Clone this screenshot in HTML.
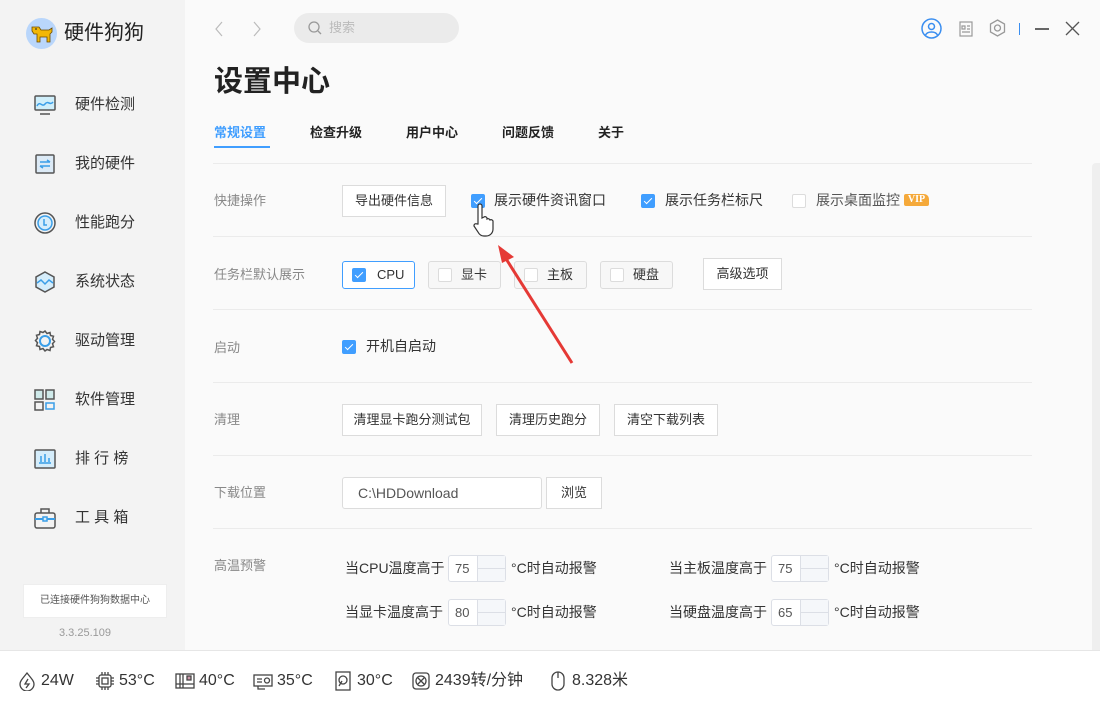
<!DOCTYPE html>
<html><head><meta charset="utf-8"><style>
*{margin:0;padding:0;box-sizing:border-box}
body{width:1100px;height:709px;overflow:hidden;background:#fafafa;font-family:"Liberation Sans","Noto Sans CJK SC",sans-serif;color:#333;position:relative;line-height:1.2}
.a{position:absolute}
#side{left:0;top:0;width:185px;height:650px;background:#f3f3f3}
.nav{position:absolute;left:33px;font-size:15px;color:#333;display:flex;align-items:center;height:24px}
.nav svg{width:24px;height:24px;margin-right:18px}
.line{position:absolute;left:213px;width:819px;height:1px;background:#ebebeb}
.lbl{position:absolute;left:214px;font-size:13px;color:#888}
.btn{position:absolute;height:31px;border:1px solid #dcdcdc;background:#fff;font-size:13px;color:#333;display:flex;align-items:center;justify-content:center}
.cb{position:absolute;width:14px;height:14px;border:1px solid #dcdcdc;background:#fff;border-radius:2px}
.cb.on{background:#409eff;border-color:#409eff}
.cb.on::after{content:"";position:absolute;left:4px;top:1px;width:3px;height:7px;border:solid #fff;border-width:0 1.5px 1.5px 0;transform:rotate(45deg)}
.t14{position:absolute;font-size:14px;color:#333}
.num{position:absolute;width:58px;height:27px;border:1px solid #dcdfe6;border-radius:3px;background:#fff;font-size:13px;color:#555}
.num span{position:absolute;left:6px;top:5px}
.num i{position:absolute;right:0;top:0;width:28px;height:25px;border-left:1px solid #dcdfe6;background:#f5f7fa}
.num i::before{content:"";position:absolute;left:0;right:0;top:12px;height:1px;background:#dcdfe6}
.bot{position:absolute;top:670px;height:22px;font-size:16px;color:#333;display:flex;align-items:center}
.bot svg{width:20px;height:20px;margin-right:4px}
</style></head><body>
<div class="a" id="side"></div>
<div class="a" style="left:26px;top:18px;width:31px;height:31px;border-radius:50%;background:#b9d6fb"></div>
<svg class="a" style="left:30px;top:23px" width="24" height="20" viewBox="0 0 24 20"><path d="M2 4h7l2 3h8l3-2v4l-2 2v8h-3v-5h-7v5H7v-8H4L2 8z" fill="#f2b705" stroke="#6b4a00" stroke-width="0.8"/><circle cx="6" cy="6" r="0.9" fill="#333"/></svg>
<div class="a" style="left:64px;top:21px;font-size:20px;color:#222">硬件狗狗</div>

<div class="nav" style="top:93px"><svg viewBox="0 0 24 24" fill="none" stroke="#555" stroke-width="1.5"><rect x="2" y="3" width="20" height="14" rx="1" fill="#cfeefa"/><path d="M4 13c3-6 5 2 8-2s5 2 8-2" stroke="#3a9ee8"/><path d="M7 21h10"/></svg>硬件检测</div>
<div class="nav" style="top:152px"><svg viewBox="0 0 24 24" fill="none" stroke="#555" stroke-width="1.5"><rect x="3" y="3" width="18" height="18" rx="1" fill="#dceaf6"/><path d="M7 10h10M14 8l3 2M7 14h10M10 16l-3-2" stroke="#3a9ee8"/></svg>我的硬件</div>
<div class="nav" style="top:211px"><svg viewBox="0 0 24 24" fill="none" stroke="#555" stroke-width="1.5"><circle cx="12" cy="12" r="10"/><circle cx="12" cy="12" r="7" stroke="#3a9ee8" fill="#d5edfb"/><path d="M11 8v6h3" stroke="#3a9ee8"/></svg>性能跑分</div>
<div class="nav" style="top:270px"><svg viewBox="0 0 24 24" fill="none" stroke="#555" stroke-width="1.5"><path d="M12 2l9 5v10l-9 5-9-5V7z" fill="#d5edfb"/><path d="M4 13l4-3 4 4 4-4 4 3" stroke="#3a9ee8"/></svg>系统状态</div>
<div class="nav" style="top:329px"><svg viewBox="0 0 24 24" fill="none" stroke="#555" stroke-width="1.5"><path d="M12 2l2 2.5 3-1 .5 3 3 .8-1 3 2 2.2-2 2.2 1 3-3 .8-.5 3-3-1L12 22l-2-2.5-3 1-.5-3-3-.8 1-3-2-2.2 2-2.2-1-3 3-.8.5-3 3 1z"/><circle cx="12" cy="12" r="5" stroke="#3a9ee8" stroke-width="2"/></svg>驱动管理</div>
<div class="nav" style="top:388px"><svg viewBox="0 0 24 24" fill="none" stroke="#555" stroke-width="1.5"><rect x="2" y="2" width="8" height="9" fill="#cfeaea"/><rect x="13" y="2" width="8" height="9" fill="#cfeaea"/><rect x="2" y="14" width="8" height="8"/><rect x="13" y="15" width="8" height="6" stroke="#3a9ee8"/></svg>软件管理</div>
<div class="nav" style="top:447px"><svg viewBox="0 0 24 24" fill="none" stroke="#555" stroke-width="1.5"><rect x="2" y="3" width="20" height="18" rx="1" fill="#d5edfb"/><path d="M8 15V9M12 15V7M16 15v-4M6 16h12" stroke="#3a9ee8"/></svg>排 行 榜</div>
<div class="nav" style="top:506px"><svg viewBox="0 0 24 24" fill="none" stroke="#555" stroke-width="1.5"><rect x="2" y="7" width="20" height="15" rx="2"/><path d="M8 7V3h8v4"/><path d="M2 13h20" stroke="#3a9ee8" stroke-width="2"/><rect x="10" y="11" width="4" height="4" fill="#d5edfb" stroke="#3a9ee8"/></svg>工 具 箱</div>

<div class="a" style="left:23px;top:584px;width:144px;height:34px;background:#fff;border:1px solid #eee;font-size:10px;color:#555;display:flex;align-items:center;justify-content:center">已连接硬件狗狗数据中心</div>
<div class="a" style="left:59px;top:627px;font-size:11px;color:#999">3.3.25.109</div>

<svg class="a" style="left:213px;top:20px" width="50" height="18" viewBox="0 0 50 18" fill="none" stroke="#bbb" stroke-width="1.2"><path d="M9 2L3 9l6 7M41 2l6 7-6 7"/></svg>
<div class="a" style="left:294px;top:13px;width:165px;height:30px;border-radius:15px;background:#ebebeb"></div>
<svg class="a" style="left:308px;top:21px" width="14" height="14" viewBox="0 0 14 14" fill="none" stroke="#999" stroke-width="1.3"><circle cx="6" cy="6" r="5"/><path d="M10 10l3 3"/></svg>
<div class="a" style="left:329px;top:20px;font-size:13px;color:#bbb">搜索</div>
<svg class="a" style="left:921px;top:18px" width="21" height="21" viewBox="0 0 21 21" fill="none" stroke="#3a8ef0" stroke-width="1.5"><circle cx="10.5" cy="10.5" r="9.5"/><circle cx="10.5" cy="8.5" r="3"/><path d="M4.5 17c2-4 10-4 12 0"/></svg>
<svg class="a" style="left:959px;top:21px" width="14" height="16" viewBox="0 0 14 16" fill="none" stroke="#999" stroke-width="1.2"><rect x="1" y="1" width="12" height="14"/><path d="M3 5h3v3H3zM8 5h3M8 8h3M3 11h8"/></svg>
<svg class="a" style="left:989px;top:19px" width="17" height="18" viewBox="0 0 17 18" fill="none" stroke="#999" stroke-width="1.3"><path d="M8.5 1l7 4v8l-7 4-7-4V5z"/><circle cx="8.5" cy="9" r="3"/></svg>
<div class="a" style="left:1019px;top:23px;width:1px;height:12px;background:#3a8ef0"></div>
<div class="a" style="left:1035px;top:28px;width:14px;height:1.5px;background:#666"></div>
<svg class="a" style="left:1065px;top:21px" width="15" height="15" viewBox="0 0 15 15" stroke="#555" stroke-width="1.3"><path d="M1 1l13 13M14 1L1 14"/></svg>

<div class="a" style="left:214px;top:65px;font-size:29px;font-weight:bold;color:#222">设置中心</div>
<div class="a" style="left:214px;top:125px;font-size:13px;font-weight:bold;color:#409eff">常规设置</div>
<div class="a" style="left:214px;top:146px;width:56px;height:2px;background:#409eff"></div>
<div class="a" style="left:310px;top:125px;font-size:13px;font-weight:bold;color:#222">检查升级</div>
<div class="a" style="left:406px;top:125px;font-size:13px;font-weight:bold;color:#222">用户中心</div>
<div class="a" style="left:502px;top:125px;font-size:13px;font-weight:bold;color:#222">问题反馈</div>
<div class="a" style="left:598px;top:125px;font-size:13px;font-weight:bold;color:#222">关于</div>

<div class="a" style="left:1092px;top:163px;width:8px;height:487px;background:#efefef;border-radius:4px 0 0 0"></div>

<div class="line" style="top:163px"></div>
<div class="line" style="top:236px"></div>
<div class="line" style="top:309px"></div>
<div class="line" style="top:382px"></div>
<div class="line" style="top:455px"></div>
<div class="line" style="top:528px"></div>

<div class="lbl" style="top:193px">快捷操作</div>
<div class="btn" style="left:342px;top:185px;width:104px;height:32px">导出硬件信息</div>
<div class="cb on" style="left:471px;top:194px"></div><div class="t14" style="left:494px;top:192px">展示硬件资讯窗口</div>
<div class="cb on" style="left:641px;top:194px"></div><div class="t14" style="left:665px;top:192px">展示任务栏标尺</div>
<div class="cb" style="left:792px;top:194px"></div><div class="t14" style="left:816px;top:192px;color:#555">展示桌面监控</div>
<div class="a" style="left:904px;top:194px;width:25px;height:12px;background:#f5a93a;color:#fff;font-size:10px;font-family:'Liberation Serif',serif;font-weight:bold;text-align:center;line-height:12px;border-radius:2px 5px 2px 2px">VIP</div>

<div class="lbl" style="top:267px">任务栏默认展示</div>
<div class="btn" style="left:342px;top:261px;width:73px;height:28px;border-color:#409eff;border-radius:3px;justify-content:flex-start;padding-left:34px">CPU</div>
<div class="cb on" style="left:352px;top:268px"></div>
<div class="btn" style="left:428px;top:261px;width:73px;height:28px;border-radius:3px;background:#f7f7f7;justify-content:flex-start;padding-left:32px">显卡</div>
<div class="cb" style="left:438px;top:268px"></div>
<div class="btn" style="left:514px;top:261px;width:73px;height:28px;border-radius:3px;background:#f7f7f7;justify-content:flex-start;padding-left:32px">主板</div>
<div class="cb" style="left:524px;top:268px"></div>
<div class="btn" style="left:600px;top:261px;width:73px;height:28px;border-radius:3px;background:#f7f7f7;justify-content:flex-start;padding-left:32px">硬盘</div>
<div class="cb" style="left:610px;top:268px"></div>
<div class="btn" style="left:703px;top:258px;width:79px;height:32px">高级选项</div>

<div class="lbl" style="top:340px">启动</div>
<div class="cb on" style="left:342px;top:340px"></div><div class="t14" style="left:366px;top:338px">开机自启动</div>

<div class="lbl" style="top:412px">清理</div>
<div class="btn" style="left:342px;top:404px;width:140px;height:32px">清理显卡跑分测试包</div>
<div class="btn" style="left:496px;top:404px;width:104px;height:32px">清理历史跑分</div>
<div class="btn" style="left:614px;top:404px;width:104px;height:32px">清空下载列表</div>

<div class="lbl" style="top:485px">下载位置</div>
<div class="btn" style="left:342px;top:477px;width:200px;height:32px;border-radius:3px;justify-content:flex-start;padding-left:15px;font-size:14px;color:#555">C:\HDDownload</div>
<div class="btn" style="left:546px;top:477px;width:56px;height:32px">浏览</div>

<div class="lbl" style="top:558px">高温预警</div>
<div class="t14" style="left:345px;top:560px">当CPU温度高于</div><div class="num" style="left:448px;top:555px"><span>75</span><i></i></div><div class="t14" style="left:511px;top:560px">°C时自动报警</div>
<div class="t14" style="left:669px;top:560px">当主板温度高于</div><div class="num" style="left:771px;top:555px"><span>75</span><i></i></div><div class="t14" style="left:834px;top:560px">°C时自动报警</div>
<div class="t14" style="left:345px;top:604px">当显卡温度高于</div><div class="num" style="left:448px;top:599px"><span>80</span><i></i></div><div class="t14" style="left:511px;top:604px">°C时自动报警</div>
<div class="t14" style="left:669px;top:604px">当硬盘温度高于</div><div class="num" style="left:771px;top:599px"><span>65</span><i></i></div><div class="t14" style="left:834px;top:604px">°C时自动报警</div>

<svg class="a" style="left:470px;top:200px" width="130" height="170" viewBox="0 0 130 170">
<path d="M8 24V6a2 2 0 014 0v12l2-1a2 2 0 013 1v1a2 2 0 013 1 2 2 0 013 1v8c0 4-3 7-7 7h-2c-3 0-5-2-6-4l-4-6a2 2 0 013-2z" fill="#fff" stroke="#333" stroke-width="1.2"/>
<path d="M102 163L33 54" stroke="#e53935" stroke-width="3"/>
<path d="M28 45l16 12-12 6z" fill="#e53935"/>
</svg>

<div class="a" style="left:0;top:650px;width:1100px;height:59px;background:#fff;border-top:1px solid #e6e6e6"></div>
<div class="bot" style="left:17px"><svg viewBox="0 0 20 20" fill="none" stroke="#444" stroke-width="1.3"><path d="M10 2c4 5 7 8 7 11a7 7 0 01-14 0c0-3 3-6 7-11z"/><path d="M11 8l-3 5h4l-3 4"/></svg>24W</div>
<div class="bot" style="left:95px"><svg viewBox="0 0 20 20" fill="none" stroke="#444" stroke-width="1.3"><rect x="4" y="4" width="12" height="12" rx="2"/><rect x="7" y="7" width="6" height="6"/><path d="M7 1v3M10 1v3M13 1v3M7 16v3M10 16v3M13 16v3M1 7h3M1 10h3M1 13h3M16 7h3M16 10h3M16 13h3"/></svg>53°C</div>
<div class="bot" style="left:175px"><svg viewBox="0 0 20 20" fill="none" stroke="#444" stroke-width="1.3"><rect x="1" y="3" width="18" height="14"/><path d="M5 3v14M8 3v14M1 13h18"/><rect x="12" y="5" width="4" height="4" fill="#c9a"/></svg>40°C</div>
<div class="bot" style="left:253px"><svg viewBox="0 0 20 20" fill="none" stroke="#444" stroke-width="1.3"><rect x="1" y="4" width="18" height="11"/><path d="M4 8h5M4 11h5M5 15v3h7"/><circle cx="14" cy="9.5" r="2.5"/></svg>35°C</div>
<div class="bot" style="left:333px"><svg viewBox="0 0 20 20" fill="none" stroke="#444" stroke-width="1.3"><rect x="3" y="1" width="14" height="18"/><circle cx="10" cy="9" r="4"/><path d="M9 10l-3 5"/></svg>30°C</div>
<div class="bot" style="left:411px"><svg viewBox="0 0 20 20" fill="none" stroke="#444" stroke-width="1.3"><rect x="2" y="2" width="16" height="16" rx="3"/><circle cx="10" cy="10" r="5"/><path d="M7 7l6 6M13 7l-6 6"/></svg>2439转/分钟</div>
<div class="bot" style="left:548px"><svg viewBox="0 0 20 20" fill="none" stroke="#444" stroke-width="1.3"><rect x="4" y="1" width="12" height="18" rx="6"/><path d="M10 1v6"/></svg>8.328米</div>
</body></html>
